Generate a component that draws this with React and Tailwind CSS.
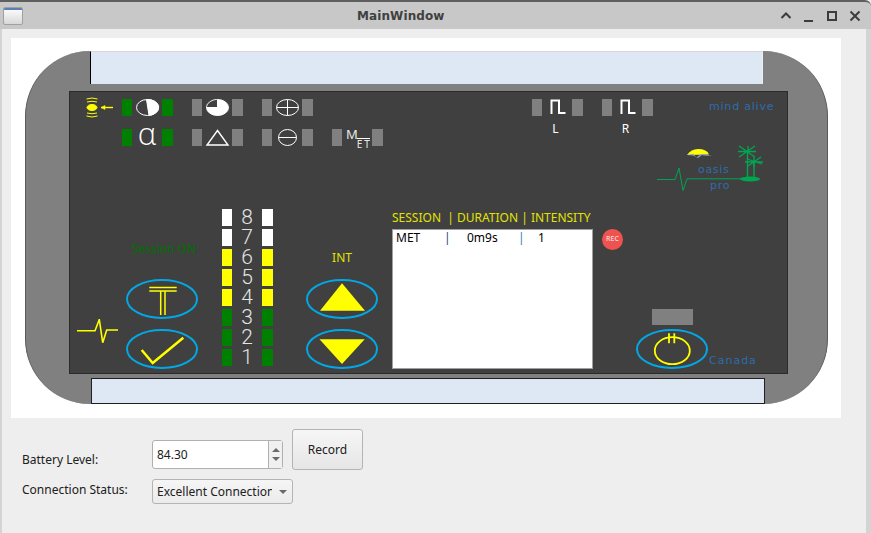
const uiFont = "font-['Noto_Sans',sans-serif]";
const blueText = "text-[#2e6cab] font-['DejaVu_Sans',sans-serif]";

// two small led bars with a symbol between them
function LedPair({ color = "bg-[#808080]", children }) {
  return (
    <div className="grid grid-cols-[10px_30px_11px] h-[17px]">
      <div className={color} />
      <div className="flex items-center justify-center">{children}</div>
      <div className={color} />
    </div>
  );
}

function Symbol({ children }) {
  return (
    <svg width="30" height="17" viewBox="0 0 30 17" fill="none" stroke="#fff" strokeWidth="1">
      {children}
    </svg>
  );
}

const SquareWave = () => (
  <Symbol>
    <path d="M9.5 15V1.5H17V14H23.5" strokeWidth="2" />
  </Symbol>
);

function Oval({ children }) {
  return (
    <svg width="72" height="40" viewBox="0 0 72 40" fill="none">
      <ellipse cx="36" cy="20" rx="35" ry="19" stroke="#00a9e6" strokeWidth="2" />
      {children}
    </svg>
  );
}

const levels = [
  { n: "8", color: "bg-white" },
  { n: "7", color: "bg-white" },
  { n: "6", color: "bg-[#ffff00]" },
  { n: "5", color: "bg-[#ffff00]" },
  { n: "4", color: "bg-[#ffff00]" },
  { n: "3", color: "bg-[#008000]" },
  { n: "2", color: "bg-[#008000]" },
  { n: "1", color: "bg-[#008000]" },
];

function TitleBar() {
  return (
    <div className="h-[29px] bg-[#c8c8c8] border-t-2 border-[#5f5f5f] rounded-tr-[6px] flex items-center pl-[3px] pr-[8px] shrink-0">
      <div className="w-[20px] h-[18px] rounded-[2px] border border-[#a0a0a0] bg-gradient-to-b from-white to-[#d8d8d8] overflow-hidden">
        <div className="h-[2px] bg-[#5b7fb5]" />
      </div>
      <div className="ml-[334px] w-[87px] text-[12px] font-bold text-[#404040] font-['DejaVu_Sans',sans-serif] tracking-[0.1px] whitespace-nowrap">
        MainWindow
      </div>
      <div className="ml-auto flex items-center gap-[7px]">
        <svg width="16" height="16" viewBox="0 0 16 16" fill="none" stroke="#3c3c3c" strokeWidth="2">
          <path d="M3.5 10L8 5.5L12.5 10" />
        </svg>
        <svg width="16" height="16" viewBox="0 0 16 16" fill="none" stroke="#3c3c3c" strokeWidth="2">
          <path d="M3 13H12" />
        </svg>
        <svg width="16" height="16" viewBox="0 0 16 16" fill="none" stroke="#3c3c3c" strokeWidth="2">
          <rect x="4" y="4" width="8" height="8" />
        </svg>
        <svg width="16" height="16" viewBox="0 0 16 16" fill="none" stroke="#3c3c3c" strokeWidth="2">
          <path d="M3.5 3.5L12.5 12.5M12.5 3.5L3.5 12.5" />
        </svg>
      </div>
    </div>
  );
}

function TopRows() {
  return (
    <div className="pt-[7px] pl-[15px] flex flex-col gap-[13px]">
      <div className="flex items-center gap-[19px] h-[17px]">
        <svg width="37" height="22" viewBox="0 0 37 22" fill="none" stroke="#ffff00" className="-mr-[19px] shrink-0">
          <ellipse cx="7" cy="10.5" rx="5" ry="3" fill="#ffff00" />
          <path d="M1.5 2Q7 0 12.5 2M2 5Q7 3.5 12 5M2 16Q7 17.5 12 16M1.5 19Q7 21 12.5 19" strokeWidth="1" />
          <path d="M16 10.5H28" strokeWidth="1.4" />
          <path d="M16 10.5L20 8.5V12.5Z" fill="#ffff00" strokeWidth="0.5" />
        </svg>
        <LedPair color="bg-[#008000]">
          <Symbol>
            <ellipse cx="15.5" cy="8.5" rx="11" ry="8" />
            <path d="M14.5 .5A11 8 0 0 1 17 16.4Z" fill="#fff" />
          </Symbol>
        </LedPair>
        <LedPair>
          <Symbol>
            <ellipse cx="15.5" cy="8.5" rx="11" ry="8" fill="#fff" />
            <path d="M15 .8A11 8 0 0 0 4.8 8H15Z" fill="#404040" stroke="none" />
          </Symbol>
        </LedPair>
        <LedPair>
          <Symbol>
            <ellipse cx="15.5" cy="8.5" rx="11" ry="8" />
            <path d="M15.5 .5V16.5M4.5 8.5H26.5" />
          </Symbol>
        </LedPair>
        <div className="ml-[200px]">
          <LedPair>
            <SquareWave />
          </LedPair>
        </div>
        <LedPair>
          <SquareWave />
        </LedPair>
        <div className={`ml-[37px] text-[11px] tracking-[0.8px] whitespace-nowrap ${blueText}`}>mind alive</div>
      </div>
      <div className="flex items-start gap-[19px] h-[17px] pl-[37px]">
        <LedPair color="bg-[#008000]">
          <span className="text-[31px] leading-[17px] -mt-[8px] text-white font-['Open_Sans',sans-serif] font-light">α</span>
        </LedPair>
        <LedPair>
          <Symbol>
            <path d="M15.5 1.5L26 16H5Z" strokeWidth="1.4" />
          </Symbol>
        </LedPair>
        <LedPair>
          <Symbol>
            <ellipse cx="15.5" cy="8.5" rx="9" ry="8" />
            <path d="M6.5 8.5H24.5" />
          </Symbol>
        </LedPair>
        <LedPair>
          <div className={`w-[30px] h-[17px] pl-[4px] flex items-start text-[#e8e8e8] ${uiFont}`}>
            <span className="text-[13px] leading-[12px] -mt-[1px] -mr-[1px]">M</span>
            <span className="text-[10px] leading-[8px] mt-[9px] pr-[2px] pt-px border-t border-white">E</span>
            <span className="text-[10px] leading-[8px] mt-[9px] pt-px border-t border-white">T</span>
          </div>
        </LedPair>
        <div className={`ml-[130px] w-[51px] -mt-[8px] pr-[4px] text-center text-[12px] leading-[16px] text-white ${uiFont}`}>L</div>
        <div className={`w-[51px] -mt-[8px] pr-[4px] text-center text-[12px] leading-[16px] text-white ${uiFont}`}>R</div>
      </div>
    </div>
  );
}

function OasisLogo() {
  return (
    <svg width="110" height="50" viewBox="0 0 110 50" fill="none" className="ml-[587px] -mt-[1px] shrink-0">
      <path d="M30 10Q34 4 41 4Q50 4 52 9.500Z" fill="#ffff00" />
      <path d="M30 10L36 8.800L39.500 12.500L44 9L47 9L55 11L47 10.500L45 10L41 13L36 10.500Z" fill="#8f9fc6" />
      <text x="41" y="27.500" fill="#2e6cab" fontSize="11" letterSpacing="0.7" fontFamily="DejaVu Sans, sans-serif">oasis</text>
      <text x="53" y="44" fill="#2e6cab" fontSize="11" letterSpacing="0.7" fontFamily="DejaVu Sans, sans-serif">pro</text>
      <g stroke="#00a650">
        <path d="M0 34.500H18L22 23L26 45.500L30 33.800H90" strokeWidth="1" />
        <path d="M90.500 5V33M97 17V33" strokeWidth="1.400" />
        <path d="M82 1L98 12M98 1L82 12M81 6.500H99M91 1V5" strokeWidth="1.300" />
        <path d="M90 14L105 19M104 12L91 21M88 17H106M97 12V22" strokeWidth="1.300" />
      </g>
      <ellipse cx="93" cy="34" rx="10" ry="2.500" fill="#00a650" />
    </svg>
  );
}

function ControlPanel() {
  return (
    <div className="flex items-end h-[164px] shrink-0">
      <svg width="41" height="26" viewBox="0 0 41 26" fill="none" stroke="#ffff00" strokeWidth="1.600" className="ml-[7px] mb-[28px] shrink-0">
        <path d="M0 11.700H18L22.300 .5L25.700 23.700L29.700 11H41" />
      </svg>

      <div className="ml-[8px] mb-[4px] flex flex-col items-center gap-[10px] w-[72px]">
        <div className={`mb-[12px] pl-[4px] text-[12px] leading-[16px] text-[#007000] whitespace-nowrap ${uiFont}`}>Session ON</div>
        <Oval>
          <path d="M23.300 8.500H50.700M23.300 12H50.700" stroke="#ffff00" strokeWidth="1.500" />
          <path d="M34.700 12V36M39 12V36" stroke="#ffff00" strokeWidth="1.500" />
        </Oval>
        <Oval>
          <path d="M15.700 21L26.700 34L57.300 8.700" stroke="#ffff00" strokeWidth="2.500" />
        </Oval>
      </div>

      <div className="ml-[24px] mb-[7px] flex flex-col gap-[3px] w-[51px]">
        {levels.map((l) => (
          <LedPair key={l.n} color={l.color}>
            <span className="text-[21px] leading-[17px] text-[#e4e4e4] font-['Roboto',sans-serif] font-light">{l.n}</span>
          </LedPair>
        ))}
      </div>

      <div className="ml-[33px] mb-[4px] flex flex-col items-center gap-[10px] w-[72px]">
        <div className={`-mb-[2px] pb-[5px] text-[12px] leading-[16px] text-[#e3e300] ${uiFont}`}>INT</div>
        <Oval>
          <path d="M36 4.300L59 31.700H14Z" fill="#ffff00" />
        </Oval>
        <Oval>
          <path d="M13.500 10.300H58.700L36 35Z" fill="#ffff00" />
        </Oval>
      </div>

      <div className="ml-[14px] mb-[4px] w-[201px] shrink-0">
        <div className={`h-[19px] text-[12px] leading-[16px] text-[#e3e300] whitespace-pre ${uiFont}`}>SESSION  | DURATION | INTENSITY</div>
        <div className={`h-[140px] bg-white border border-[#a0a0a0] pl-[3px] text-[12px] leading-[16px] text-black ${uiFont}`}>
          <div className="flex">
            <span className="w-[48px]">MET</span>
            <span className="text-[#1f3f7a] w-[23px]">|</span>
            <span className="w-[51px]">0m9s</span>
            <span className="text-[#2a7fc0] w-[20px]">|</span>
            <span>1</span>
          </div>
        </div>
      </div>

      <div className={`ml-[9px] mb-[123px] w-[21px] h-[21px] rounded-full bg-[#ef5350] flex items-center justify-center text-[7px] font-medium text-[#ffd9d9] shrink-0 ${uiFont}`}>
        REC
      </div>

      <div className="ml-[13px] mb-[4px] flex flex-col items-center gap-[4px] w-[72px] shrink-0">
        <div className="w-[41px] h-[16px] bg-[#808080]" />
        <Oval>
          <ellipse cx="36.300" cy="21.700" rx="17.500" ry="13.500" stroke="#ffff00" strokeWidth="1.800" />
          <path d="M33 4.300V14.300M38.300 4.300V14.300" stroke="#ffff00" strokeWidth="1.800" />
        </Oval>
      </div>

      <div className={`ml-px mb-[4px] text-[11px] tracking-[1px] ${blueText}`}>Canada</div>
    </div>
  );
}

function Device() {
  return (
    <div className="ml-[14px] mt-[12.500px] w-[803px] h-[353.500px] bg-[#808080] rounded-[65px] border border-[#5a5a5a] border-y-0 flex flex-col shrink-0">
      <div className="ml-[64px] w-[673px] h-[33.500px] bg-[#dde8f4] border-t border-[#d8d8d8] border-l border-l-black border-r border-r-[#eeeeee] shrink-0" />
      <div className="ml-[43px] mt-[7px] w-[719px] h-[283px] bg-[#404040] border border-[#2b2b2b] flex flex-col shrink-0">
        <TopRows />
        <OasisLogo />
        <div className="mt-auto">
          <ControlPanel />
        </div>
      </div>
      <div className="ml-[65px] mt-[4px] w-[674px] h-[26px] bg-[#dde8f4] border border-[#1f1f1f] shrink-0" />
    </div>
  );
}

function SettingsForm() {
  return (
    <div className={`pl-[20px] text-[12px] text-[#202020] ${uiFont}`}>
      <div className="flex items-start pt-[11px]">
        <div className="w-[130px] mt-[23px] leading-[16px]">Battery Level:</div>
        <div className="mt-[11px] w-[131px] h-[29px] bg-white border border-[#b0b0b0] rounded-[3px] flex items-center shrink-0">
          <span className="flex-1 pl-[4px]">84.30</span>
          <div className="w-[14px] h-full border-l border-[#b0b0b0] bg-[#f0f0f0] flex flex-col items-center justify-center gap-[5px]">
            <div className="w-0 h-0 border-x-[4px] border-x-transparent border-b-[4px] border-b-[#6a6a6a]" />
            <div className="w-0 h-0 border-x-[4px] border-x-transparent border-t-[4px] border-t-[#6a6a6a]" />
          </div>
        </div>
        <button className="ml-[9px] w-[71px] h-[41px] rounded-[3px] border border-[#b4b4b4] bg-gradient-to-b from-[#f6f6f6] to-[#e6e6e6]">
          Record
        </button>
      </div>
      <div className="flex items-start mt-[9px]">
        <div className="w-[130px] leading-[16px] mt-[3px]">Connection Status:</div>
        <div className="w-[141px] h-[25px] border border-[#b4b4b4] rounded-[3px] bg-gradient-to-b from-[#f6f6f6] to-[#ebebeb] flex items-center pl-[4px] shrink-0">
          <span className="w-[115px] overflow-hidden whitespace-nowrap">Excellent Connection</span>
          <div className="ml-[7px] w-0 h-0 border-x-[4px] border-x-transparent border-t-[4px] border-t-[#6a6a6a]" />
        </div>
      </div>
    </div>
  );
}

export default function App() {
  return (
    <div className="w-[871px] h-[533px] bg-[#eeeeee] flex flex-col overflow-hidden">
      <TitleBar />
      <div className="flex-1 border-l-2 border-r-[5px] border-[#d4d4d4] pt-[9px]">
        <div className="ml-[9px] w-[830px] h-[380px] bg-white flex">
          <Device />
        </div>
        <SettingsForm />
      </div>
    </div>
  );
}
